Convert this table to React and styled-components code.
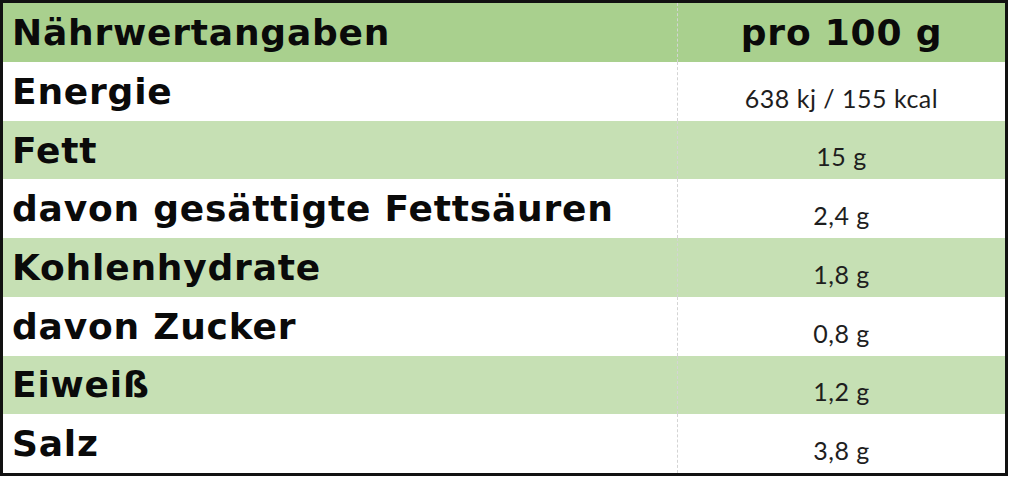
import styled, { createGlobalStyle } from "styled-components";

const GlobalStyle = createGlobalStyle`
  html, body {
    margin: 0;
    padding: 0;
    background: #ffffff;
  }
`;

const Table = styled.div`
  box-sizing: border-box;
  width: 1008px;
  height: 476px;
  border: 3px solid #111;
  display: grid;
  grid-template-columns: 674px 1fr;
  grid-template-rows: 59px repeat(7, 1fr);
  font-family: "Lato", "Liberation Sans", sans-serif;
`;

const Row = styled.div`
  display: contents;
`;

const Cell = styled.div`
  display: flex;
  background: ${(p) => (p.$head ? "#a9d08e" : p.$shade ? "#c6e0b4" : "#ffffff")};
`;

const Label = styled(Cell)`
  align-items: center;
  padding-left: 9px;
  font-family: "DejaVu Sans", sans-serif;
  font-weight: 700;
  font-size: 36px;
  color: #0a0a0a;
  letter-spacing: 0.8px;
`;

const Value = styled(Cell)`
  justify-content: center;
  align-items: ${(p) => (p.$head ? "center" : "flex-end")};
  padding-bottom: ${(p) => (p.$head ? "0" : "8px")};
  border-left: 1px dashed #d4d4d4;
  font-family: ${(p) =>
    p.$head ? '"DejaVu Sans", sans-serif' : '"Lato", sans-serif'};
  font-weight: ${(p) => (p.$head ? 700 : 400)};
  font-size: ${(p) => (p.$head ? "36px" : "25px")};
  letter-spacing: ${(p) => (p.$head ? "0.8px" : "0.5px")};
  color: ${(p) => (p.$head ? "#0a0a0a" : "#1e1e1e")};
`;

const rows = [
  ["Energie", "638 kj / 155 kcal"],
  ["Fett", "15 g"],
  ["davon gesättigte Fettsäuren", "2,4 g"],
  ["Kohlenhydrate", "1,8 g"],
  ["davon Zucker", "0,8 g"],
  ["Eiweiß", "1,2 g"],
  ["Salz", "3,8 g"],
];

export default function App() {
  return (
    <>
      <GlobalStyle />
      <Table>
        <Row>
          <Label $head>Nährwertangaben</Label>
          <Value $head>pro 100 g</Value>
        </Row>
        {rows.map(([name, amount], i) => (
          <Row key={name}>
            <Label $shade={i % 2 === 1}>{name}</Label>
            <Value $shade={i % 2 === 1}>{amount}</Value>
          </Row>
        ))}
      </Table>
    </>
  );
}
